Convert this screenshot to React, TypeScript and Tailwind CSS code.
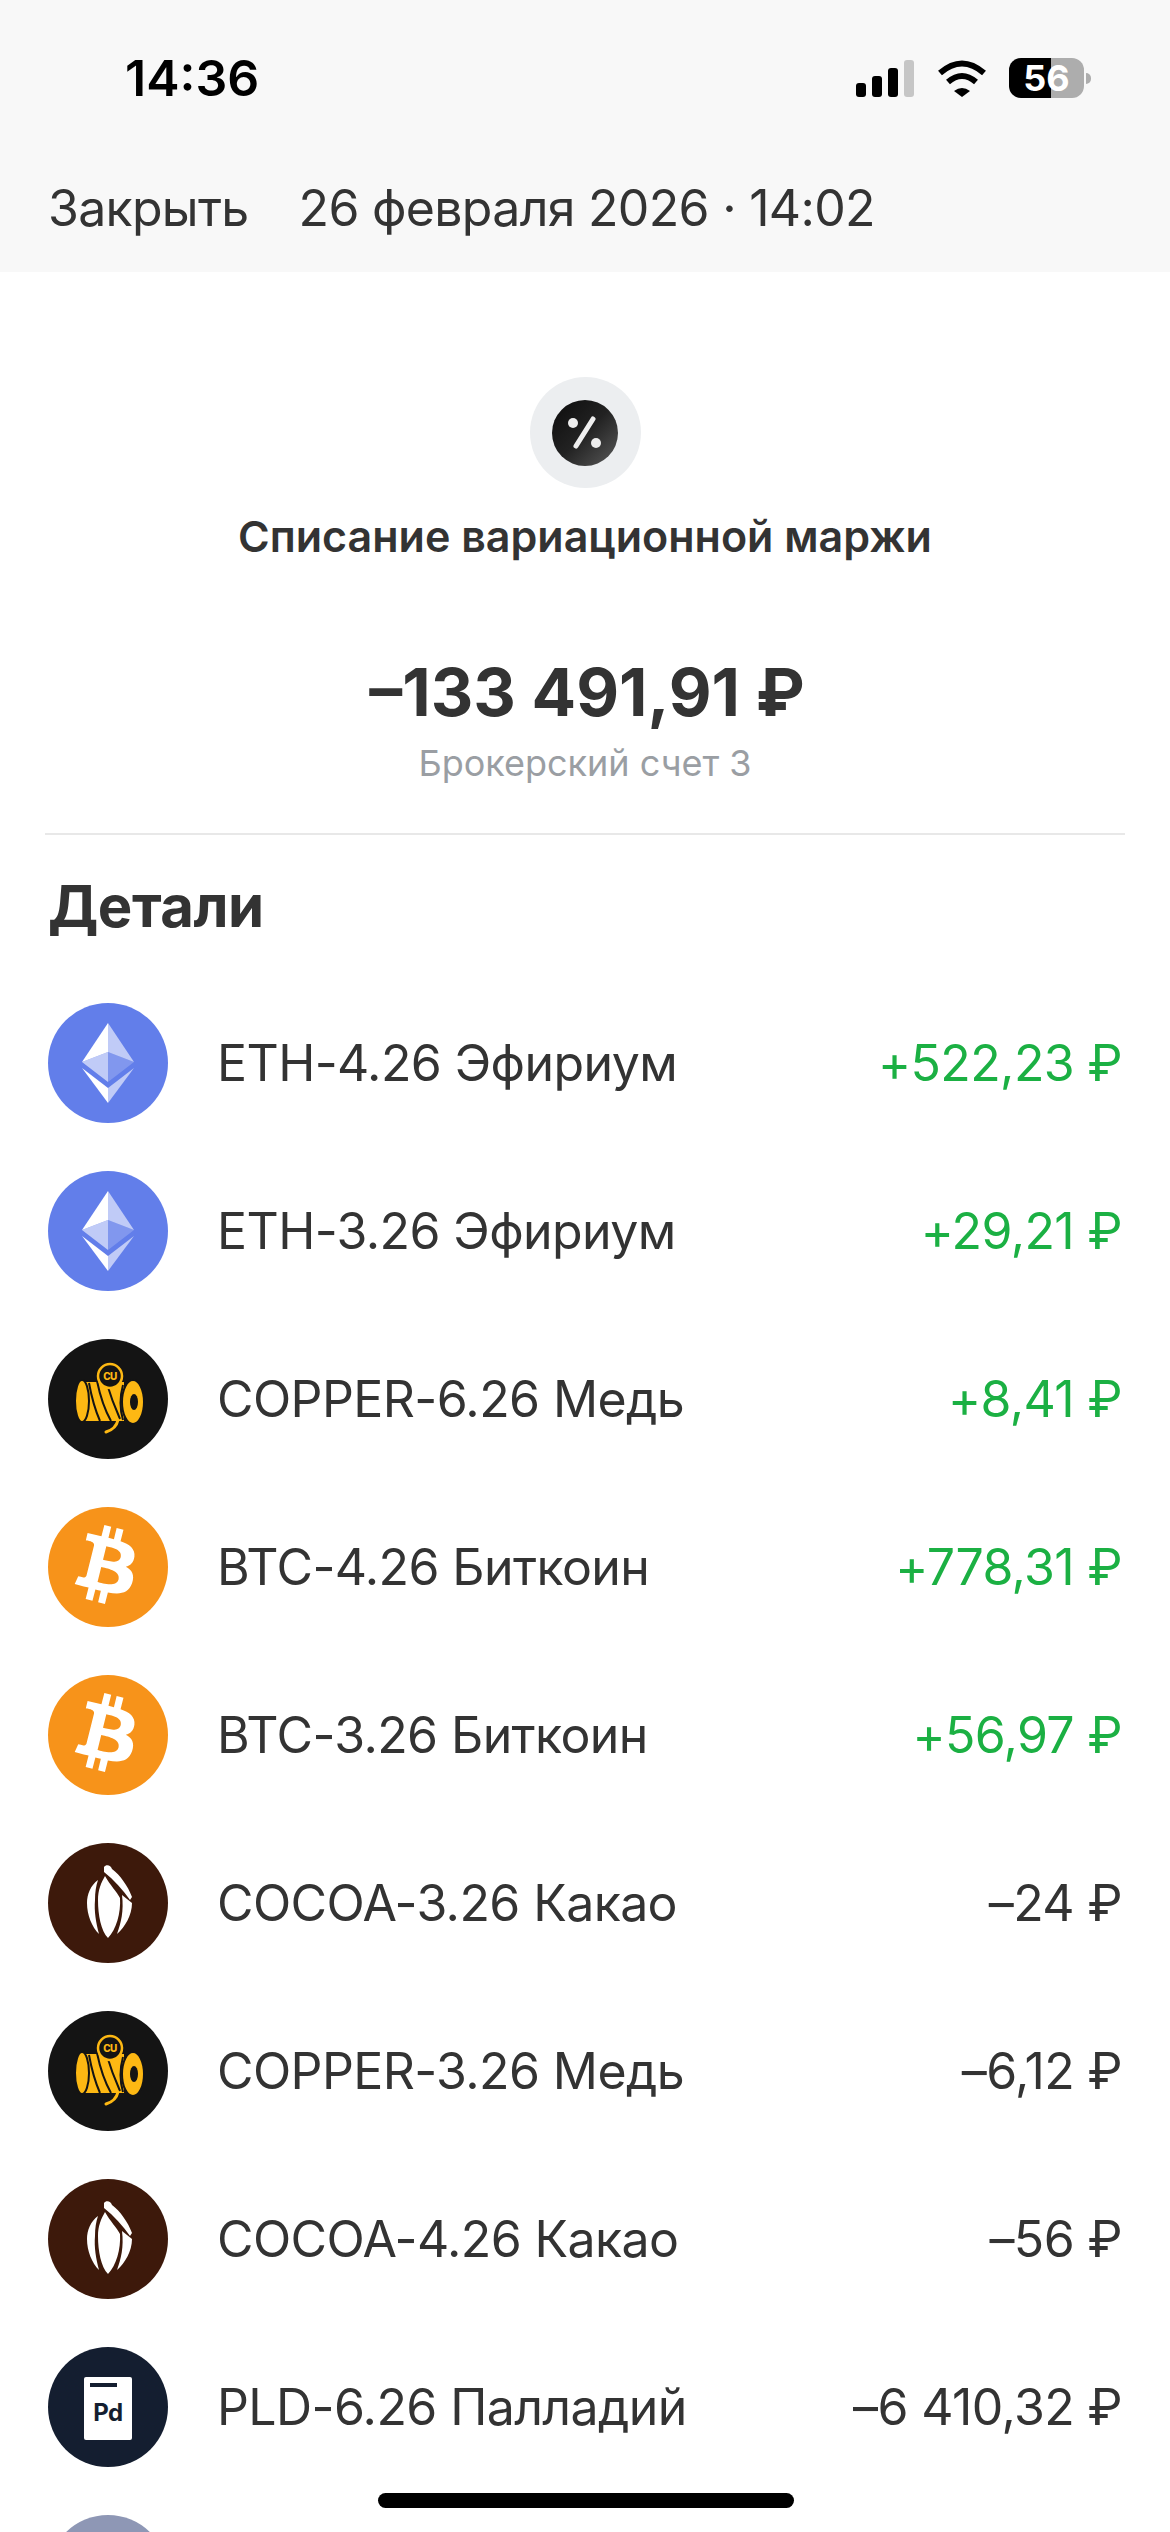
import type { ReactNode } from 'react';

function EthIcon() {
  return (
    <svg viewBox="0 0 120 120" className="w-[120px] h-[120px] shrink-0">
      <circle cx="60" cy="60" r="60" fill="#627eea" />
      <polygon points="60,20 34,59 60,49" fill="#fff" />
      <polygon points="60,20 86,59 60,49" fill="#fff" fillOpacity="0.6" />
      <polygon points="34,59 60,49 60,79" fill="#fff" fillOpacity="0.6" />
      <polygon points="86,59 60,49 60,79" fill="#fff" fillOpacity="0.2" />
      <polygon points="34,65 60,100 60,85" fill="#fff" />
      <polygon points="86,65 60,100 60,85" fill="#fff" fillOpacity="0.6" />
    </svg>
  );
}

function BtcIcon() {
  return (
    <svg viewBox="0 0 120 120" className="w-[120px] h-[120px] shrink-0">
      <circle cx="60" cy="60" r="60" fill="#f7931a" />
      <g transform="translate(-3.5 -3.5) scale(1.95)">
        <path
          fill="#fff"
          d="M46.1 27.4c.6-4.3-2.6-6.6-7.1-8.1l1.5-5.8-3.5-.9-1.4 5.7c-.9-.2-1.9-.5-2.8-.7l1.4-5.7-3.5-.9-1.5 5.8c-.8-.2-1.5-.3-2.2-.5l-4.9-1.2-.9 3.8s2.6.6 2.6.6c1.4.4 1.7 1.3 1.6 2l-1.6 6.5c.1 0 .2.1.4.1l-.4-.1-2.3 9.1c-.2.4-.6 1.1-1.6.8 0 0-2.6-.6-2.6-.6l-1.8 4 4.6 1.2c.9.2 1.7.4 2.5.6l-1.5 5.9 3.5.9 1.5-5.8c1 .3 1.9.5 2.8.7l-1.4 5.8 3.5.9 1.5-5.9c6 1.1 10.5.7 12.4-4.7 1.5-4.4-.1-6.9-3.2-8.5 2.3-.5 4-2 4.4-5.1zM38 38.8c-1.1 4.4-8.4 2-10.8 1.4l1.9-7.7c2.4.6 10 1.8 8.9 6.3zm1.1-11.4c-1 4-7.1 2-9.1 1.5l1.7-7c2 .5 8.4 1.4 7.4 5.5z"
        />
      </g>
    </svg>
  );
}

function CopperIcon() {
  return (
    <svg viewBox="0 0 120 120" className="w-[120px] h-[120px] shrink-0">
      <circle cx="60" cy="60" r="60" fill="#141414" />
      {/* spool */}
      <path d="M36 43 L76 43 L76 82 L36 82 Z" fill="#fdb813" />
      <ellipse cx="34" cy="62" rx="7" ry="21" fill="#fdb813" stroke="#141414" strokeWidth="2" />
      <path d="M41 44 Q45 66 52 82 M49 42 Q54 66 63 82 M58 42 Q64 62 72 80" stroke="#141414" strokeWidth="2" fill="none" />
      <ellipse cx="85" cy="63" rx="11" ry="22" fill="#fdb813" stroke="#141414" strokeWidth="2" />
      <path d="M75 46 Q70 64 75 81" stroke="#141414" strokeWidth="2" fill="none" />
      <ellipse cx="86" cy="63" rx="4" ry="8" fill="#141414" />
      <path d="M70 81 Q68 90 58 93" stroke="#fdb813" strokeWidth="3" strokeLinecap="round" fill="none" />
      {/* coin */}
      <circle cx="62" cy="37" r="12" fill="#141414" stroke="#fdb813" strokeWidth="2.5" />
      <text x="62" y="40.5" textAnchor="middle" fontSize="10" fontWeight="800" fill="#fdb813" fontFamily="Inter, sans-serif">
        CU
      </text>
    </svg>
  );
}

function CocoaIcon() {
  return (
    <svg viewBox="0 0 120 120" className="w-[120px] h-[120px] shrink-0">
      <circle cx="60" cy="60" r="60" fill="#3d190b" />
      <g fill="#fff">
        <path d="M56 24 C58 21 63 22 64 26 C72 32 80 43 84 54 L82 57 C75 47 66 37 56 29 Z" />
        <path d="M57 33 C62 42 69 49 72 55 C73 70 68 87 60 95 C53 88 50 72 50 57 C50 47 53 40 57 33 Z" />
        <path d="M50 37 C43 42 39 51 39 60 C39 72 44 84 51 91 C48 80 46 68 47 57 C47 49 48 43 50 37 Z" />
        <path d="M74 52 L84 60 C84 72 77 84 69 91 C73 80 76 68 74 52 Z" />
      </g>
    </svg>
  );
}

function PldIcon() {
  return (
    <svg viewBox="0 0 120 120" className="w-[120px] h-[120px] shrink-0">
      <circle cx="60" cy="60" r="60" fill="#141e30" />
      <rect x="36" y="30" width="48" height="63" rx="2" fill="#fff" />
      <rect x="42" y="36" width="27" height="4" fill="#141e30" />
      <text x="60" y="74" textAnchor="middle" fontSize="24" fontWeight="700" fill="#141e30" fontFamily="Inter, sans-serif">
        Pd
      </text>
    </svg>
  );
}

function StatusBar() {
  return (
    <div className="flex items-center justify-between h-[40px] pl-[125px] pr-[79px]">
      <span className="text-[50px] font-semibold text-black leading-none">14:36</span>
      <div className="flex items-center">
        {/* signal */}
        <div className="flex items-end gap-[6px] h-[37px]">
          <div className="w-[10px] h-[14px] rounded-[3px] bg-black" />
          <div className="w-[10px] h-[21px] rounded-[3px] bg-black" />
          <div className="w-[10px] h-[29px] rounded-[3px] bg-black" />
          <div className="w-[10px] h-[37px] rounded-[3px] bg-[#c6c6c6]" />
        </div>
        {/* wifi */}
        <svg viewBox="0 0 50 37" className="w-[50px] h-[37px] ml-[23px]">
          <path d="M3 13 Q25 -6 47 13" fill="none" stroke="#000" strokeWidth="6" />
          <path d="M11 22 Q25 10 39 22" fill="none" stroke="#000" strokeWidth="6" />
          <path d="M17 31 Q25 25 33 31 L25 37 Z" fill="#000" />
        </svg>
        {/* battery */}
        <div className="relative w-[75px] h-[40px] ml-[22px]">
          <div className="flex h-full rounded-[12px] overflow-hidden">
            <div className="w-[42px] bg-black" />
            <div className="flex-1 bg-[#adadad]" />
          </div>
          <span className="absolute inset-0 flex items-center justify-center text-[36px] font-bold text-white leading-none">56</span>
        </div>
        <div className="w-[5px] h-[11px] ml-[2px] rounded-r-full bg-[#adadad]" />
      </div>
    </div>
  );
}

const rows: { icon: ReactNode; name: string; amount: string; positive?: boolean }[] = [
  { icon: <EthIcon />, name: 'ETH-4.26 Эфириум', amount: '+522,23 ₽', positive: true },
  { icon: <EthIcon />, name: 'ETH-3.26 Эфириум', amount: '+29,21 ₽', positive: true },
  { icon: <CopperIcon />, name: 'COPPER-6.26 Медь', amount: '+8,41 ₽', positive: true },
  { icon: <BtcIcon />, name: 'BTC-4.26 Биткоин', amount: '+778,31 ₽', positive: true },
  { icon: <BtcIcon />, name: 'BTC-3.26 Биткоин', amount: '+56,97 ₽', positive: true },
  { icon: <CocoaIcon />, name: 'COCOA-3.26 Какао', amount: '–24 ₽' },
  { icon: <CopperIcon />, name: 'COPPER-3.26 Медь', amount: '–6,12 ₽' },
  { icon: <CocoaIcon />, name: 'COCOA-4.26 Какао', amount: '–56 ₽' },
  { icon: <PldIcon />, name: 'PLD-6.26 Палладий', amount: '–6 410,32 ₽' },
];

export default function App() {
  return (
    <div className="relative h-[2532px] overflow-hidden bg-white font-[Inter,sans-serif] text-[#333333]">
      {/* Header */}
      <header className="h-[272px] pt-[58px] bg-[#f8f8f8]">
        <StatusBar />
        <div className="flex items-center gap-[50px] mt-[80px] pl-[48px] text-[50px] leading-[60px] tracking-[-0.7px]">
          <span>Закрыть</span>
          <span>26 февраля 2026 · 14:02</span>
        </div>
      </header>

      {/* Summary */}
      <section className="flex flex-col items-center pt-[105px]">
        <div className="flex items-center justify-center w-[111px] h-[111px] rounded-full bg-[#eceef0]">
          <svg viewBox="0 0 66 66" className="w-[66px] h-[66px]">
            <defs>
              <linearGradient id="percent-bg" x1="0" y1="0" x2="1" y2="1">
                <stop offset="0" stopColor="#0c0c0c" />
                <stop offset="0.5" stopColor="#222" />
                <stop offset="1" stopColor="#5a5a5a" />
              </linearGradient>
            </defs>
            <circle cx="33" cy="33" r="33" fill="url(#percent-bg)" />
            <circle cx="21" cy="23" r="5" fill="#eee" />
            <circle cx="44" cy="43" r="5" fill="#eee" />
            <path d="M41 19 L24 46" stroke="#eee" strokeWidth="5" strokeLinecap="round" />
          </svg>
        </div>
        <div className="mt-[22px] text-[43px] font-semibold leading-[52px]">Списание вариационной маржи</div>
        <div className="mt-[90px] pl-[4px] text-[66px] font-bold leading-[80px]">–133 491,91 ₽</div>
        <div className="mt-[9px] text-[36px] leading-[44px] text-[#9a9ea3]">Брокерский счет 3</div>
      </section>

      <div className="h-[2px] mx-[45px] mt-[48px] bg-[#e8e8e8]" />

      {/* Details */}
      <h2 className="mt-[36px] pl-[48px] text-[58px] font-bold leading-[70px] tracking-[-0.5px]">Детали</h2>
      <div className="flex flex-col gap-[48px] mt-[62px] pl-[48px] pr-[48px]">
        {rows.map((row) => (
          <div key={row.name} className="flex items-center gap-[49px] h-[120px] text-[50px] leading-[60px] tracking-[-0.6px]">
            {row.icon}
            <span>{row.name}</span>
            <span className={`ml-auto ${row.positive ? 'text-[#1bb043]' : ''}`}>
              {row.amount}
            </span>
          </div>
        ))}
        <div className="w-[120px] h-[120px] shrink-0 rounded-full bg-[#8e97b5]" />
      </div>

      {/* Home indicator */}
      <div className="absolute left-[378px] top-[2493px] w-[416px] h-[15px] rounded-full bg-black" />
    </div>
  );
}
